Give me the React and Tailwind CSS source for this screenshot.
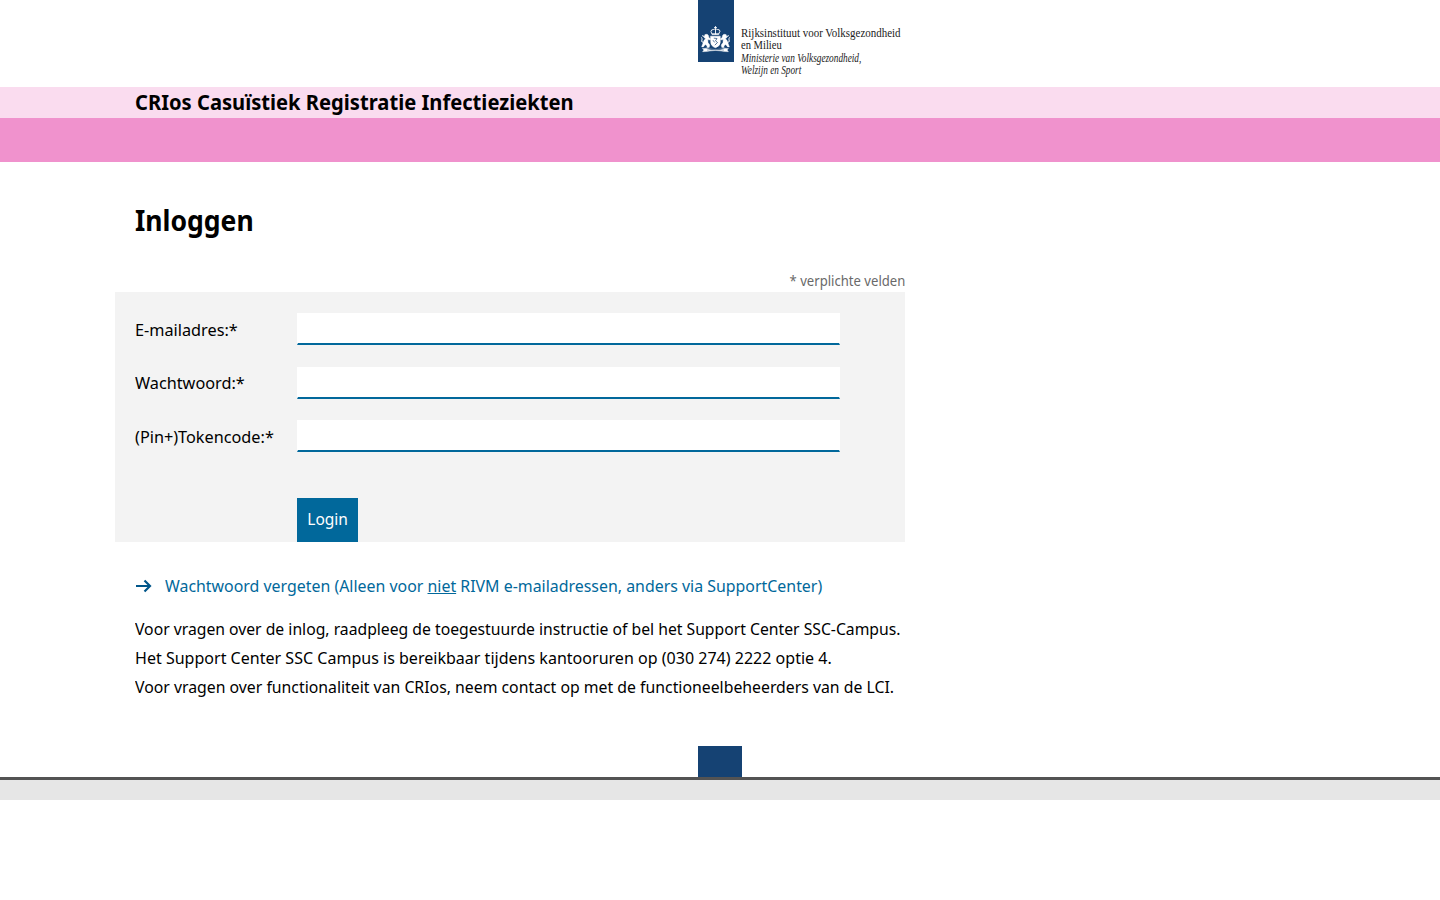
function Lion() {
  return (
    <>
      <path d="M5 8.600q2.400-1.200 3.400.8l.6 2.400 1.600 1-.4 1.200-2.400-.4.200 3 1.800 2.400-.6 2.400H6.800l.4-1.500-2-1.400-1.800 2.400H1.600l1.600-4.300q.4-2.600 2.400-3.800L4 11.400z" strokeWidth=".4" />
      <path d="M3.400 16.500Q.6 16 1.900 13.900 3 12.500 1.300 11.600M4.400 10.600L2.500 9.800" fill="none" strokeWidth="1" />
    </>
  );
}

function Crest() {
  return (
    <svg className="h-[27px] w-[31px]" viewBox="0 0 31 27" fill="#fff" stroke="#fff" strokeLinecap="round" strokeLinejoin="round">
      <path d="M15.500 .5v3M14.500 1.500h2" strokeWidth=".9" fill="none" />
      <path d="M11 5.200q.4-2 2.200-1.600 1.100-.9 2.300 0 1.200-.9 2.300 0 1.800-.4 2.200 1.600l-1.400 3h-6.200zM15.500 4v4" fill="none" strokeWidth=".9" />
      <path d="M12.300 8h6.400" strokeWidth="1.200" />
      <path d="M10.800 10.200h9.400v6.300q0 3.600-4.700 5.200-4.700-1.600-4.700-5.200z" strokeWidth=".6" />
      <path d="M14.200 12.200l2.800.3-1.500 2.300 2 1.700-2.400 2.400M13.200 14.500l1.200 1.600" fill="none" stroke="#154273" strokeWidth=".7" />
      <Lion />
      <g transform="translate(31 0) scale(-1 1)">
        <Lion />
      </g>
      <path d="M2.500 22.500l3.500-.3q9.500 3 19 0l3.500.3-1.300 1.600 1.300 1.600-4.500-.2q-8.500-2.200-17 0l-4.500.2 1.300-1.600z" strokeWidth=".3" />
      <path d="M7.500 24q8-2 16 0" fill="none" stroke="#154273" strokeWidth=".5" />
    </svg>
  );
}

function Field({ label, className, labelClass }) {
  return (
    <div className={`flex h-8 ${className}`}>
      <label className="w-[162px] whitespace-nowrap text-[16.5px] leading-8">
        <span className={`inline-block origin-left scale-x-[.985] ${labelClass}`}>{label}</span>
      </label>
      <input className="h-8 w-[543px] border-x border-b-2 border-x-white border-b-[#01689b] bg-white px-2 outline-none" />
    </div>
  );
}

export default function App() {
  return (
    <div className="min-h-[900px] w-full bg-white font-['Noto_Sans',sans-serif] text-black">
      <header className="flex h-[87px] pl-[698px]">
        <div className="flex h-[62px] w-[35.5px] items-end justify-center bg-[#154273] pb-[9px]">
          <Crest />
        </div>
        <div className="flex flex-col items-start whitespace-nowrap pl-[7.5px] pt-[27px] font-['Liberation_Serif',serif] text-[12px] leading-[12.4px] text-[#222]">
          <span className="origin-left scale-x-[.912]">Rijksinstituut voor Volksgezondheid</span>
          <span className="origin-left scale-x-[.88]">en Milieu</span>
          <span className="origin-left scale-x-[.773] italic">Ministerie van Volksgezondheid,</span>
          <span className="origin-left scale-x-[.77] italic">Welzijn en Sport</span>
        </div>
      </header>
      <div className="h-[31px] bg-[#fadcef] pl-[135px]">
        <span className="inline-block origin-left scale-x-[.916] whitespace-nowrap text-[22px] font-bold leading-[29px]">CRIos Casuïstiek Registratie Infectieziekten</span>
      </div>
      <div className="h-11 bg-[#f092cd]" />
      <main className="flex h-[584px] w-[905px] flex-col pl-[115px]">
        <h1 className="flex h-[110px] items-start pl-5 pt-[38px] text-[29px] font-bold leading-[39px]">
          <span className="origin-left scale-x-[.915]">Inloggen</span>
        </h1>
        <p className="flex h-5 justify-end whitespace-nowrap text-[13.5px] leading-[19px] text-[#696969]">
          <span className="origin-right scale-x-[.97]">* verplichte velden</span>
        </p>
        <form className="flex h-[250px] flex-col bg-[#f3f3f3] pl-5 pt-[21px]" onSubmit={(e) => e.preventDefault()}>
          <Field label="E-mailadres:*" className="mb-[22px]" labelClass="pt-px" />
          <Field label="Wachtwoord:*" className="mb-[21px]" labelClass="" />
          <Field label="(Pin+)Tokencode:*" className="mb-[46px]" labelClass="pt-px" />
          <button className="ml-[162px] h-11 w-[61px] bg-[#01689b] pb-0.5 text-[16.5px] text-white">
            <span className="inline-block scale-x-[.94]">Login</span>
          </button>
        </form>
        <a className="mt-[29px] flex h-[30px] items-center whitespace-nowrap pl-5 text-[16.5px] text-[#01689b]">
          <svg className="mr-[13px] h-[14px] w-[17px]" viewBox="0 0 17 14" fill="none" stroke="#01568a" strokeWidth="2.200">
            <path d="M1 7h14M9.500 1.500L15 7l-5.500 5.500" />
          </svg>
          <span className="origin-left scale-x-[.964]">Wachtwoord vergeten (Alleen voor <u>niet</u> RIVM e-mailadressen, anders via SupportCenter)</span>
        </a>
        <div className="mt-[13px] flex flex-col items-start whitespace-nowrap pl-5 text-[16.5px] leading-[29px]">
          <span className="origin-left scale-x-[.953]">Voor vragen over de inlog, raadpleeg de toegestuurde instructie of bel het Support Center SSC-Campus.</span>
          <span className="origin-left scale-x-[.972]">Het Support Center SSC Campus is bereikbaar tijdens kantooruren op (030 274) 2222 optie 4.</span>
          <span className="origin-left scale-x-[.958]">Voor vragen over functionaliteit van CRIos, neem contact op met de functioneelbeheerders van de LCI.</span>
        </div>
      </main>
      <footer>
        <div className="ml-[698px] h-[31px] w-11 bg-[#154273]" />
        <div className="h-[23px] border-t-[3px] border-[#535353] bg-[#e6e6e6]" />
      </footer>
    </div>
  );
}
